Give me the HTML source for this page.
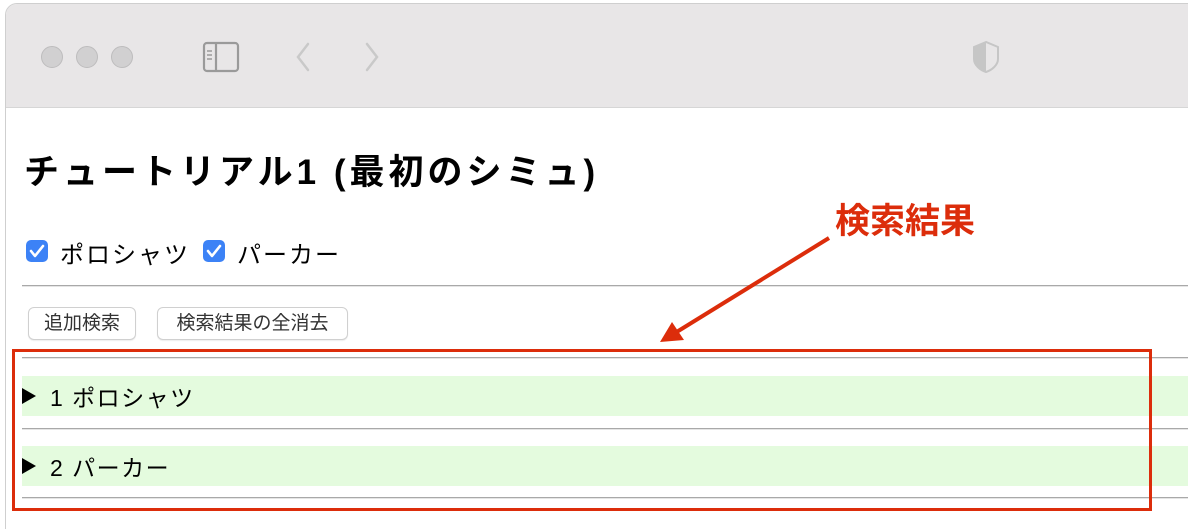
<!DOCTYPE html>
<html><head><meta charset="utf-8"><style>
*{margin:0;padding:0;box-sizing:border-box}
html,body{width:1188px;height:529px;overflow:hidden}
body{background:#fff;position:relative;font-family:"Liberation Sans","Noto Sans CJK JP",sans-serif;color:#000}
.win{position:absolute;left:5px;top:3px;width:1200px;height:540px;border:1px solid #cfcfcf;border-radius:12px 0 0 0;overflow:hidden;background:#fff}
.bar{position:absolute;left:0;top:0;right:0;height:104px;background:#e8e6e7;border-bottom:1px solid #d6d6d6}
.dot{position:absolute;top:42px;width:22px;height:22px;border-radius:50%;background:#d1d0d1;border:1px solid #bdbcbd}
.abs{position:absolute}
.hr{position:absolute;left:22px;right:0;height:2px;background:#a9a9a9;border-bottom:1px solid #e5e5e5}
.green{position:absolute;left:22px;right:0;height:40px;background:#e4fbde}
.btn{position:absolute;top:307px;height:33px;border:1px solid #d0d0d0;border-radius:6px;background:#fff;font-size:19px;line-height:31px;text-align:center;color:#333;box-shadow:0 1px 1px rgba(0,0,0,.08);white-space:nowrap}
.cb{position:absolute;top:240px;width:22px;height:22px;border-radius:5px;background:#3c82f6}
.row{position:absolute;left:50px;font-size:23px;letter-spacing:1.5px;white-space:nowrap}
.tri{position:absolute;left:22px;width:0;height:0;border-left:14px solid #000;border-top:8px solid transparent;border-bottom:8px solid transparent}
</style></head><body>
<div class="win">
<div class="bar">
<div class="dot" style="left:35px"></div><div class="dot" style="left:70px"></div><div class="dot" style="left:105px"></div>
<svg class="abs" style="left:196px;top:36px" width="40" height="34" viewBox="0 0 40 34"><rect x="2" y="3" width="34" height="28" rx="3" fill="none" stroke="#9a9a9a" stroke-width="2.2"/><line x1="14" y1="3" x2="14" y2="31" stroke="#9a9a9a" stroke-width="2.2"/><path d="M5 11h5M5 15h5M5 19h5" stroke="#9a9a9a" stroke-width="1.5"/></svg>
<svg class="abs" style="left:282px;top:36px" width="100" height="34"><path d="M20 4L10 17L20 30" fill="none" stroke="#c9c9c9" stroke-width="2.5" stroke-linecap="round"/><path d="M79 4L89 17L79 30" fill="none" stroke="#c9c9c9" stroke-width="2.5" stroke-linecap="round"/></svg>
<svg class="abs" style="left:965px;top:35px" width="30" height="36" viewBox="0 0 30 36"><path d="M15 3L3 8V20C3 26 9 31 15 33C21 31 27 26 27 20V8Z" fill="none" stroke="#c6c6c6" stroke-width="2"/><path d="M15 3L3 8V20C3 26 9 31 15 33Z" fill="#c6c6c6"/></svg>
</div>
</div>
<div class="abs" style="left:24px;top:144px;font-size:35px;font-weight:bold;letter-spacing:4px;white-space:nowrap">チュートリアル1 (最初のシミュ)</div>
<div class="cb" style="left:26px"><svg width="22" height="22"><path d="M5 11l4 5l8-10" fill="none" stroke="#fff" stroke-width="2.6" stroke-linecap="round" stroke-linejoin="round"/></svg></div>
<div class="abs" style="left:60px;top:235px;font-size:24px;letter-spacing:2px;white-space:nowrap">ポロシャツ</div>
<div class="cb" style="left:203px"><svg width="22" height="22"><path d="M5 11l4 5l8-10" fill="none" stroke="#fff" stroke-width="2.6" stroke-linecap="round" stroke-linejoin="round"/></svg></div>
<div class="abs" style="left:237px;top:235px;font-size:24px;letter-spacing:2px;white-space:nowrap">パーカー</div>
<div class="hr" style="top:285px"></div>
<div class="btn" style="left:28px;width:108px">追加検索</div>
<div class="btn" style="left:157px;width:191px">検索結果の全消去</div>
<div class="hr" style="top:357px"></div>
<div class="green" style="top:376px"></div>
<div class="tri" style="top:388px"></div>
<div class="row" style="top:379px">1 ポロシャツ</div>
<div class="hr" style="top:428px"></div>
<div class="green" style="top:446px"></div>
<div class="tri" style="top:458px"></div>
<div class="row" style="top:449px">2 パーカー</div>
<div class="hr" style="top:497px"></div>
<div class="abs" style="left:12px;top:349px;width:1140px;height:162px;border:3px solid #dc2d0b"></div>
<div class="abs" style="left:835px;top:193px;font-size:35px;font-weight:bold;color:#dc2d0b;white-space:nowrap">検索結果</div>
<svg class="abs" style="left:0;top:0" width="1188" height="529"><line x1="829" y1="238" x2="675" y2="333" stroke="#dc2d0b" stroke-width="4"/><path d="M660 342L672 322L684 340Z" fill="#dc2d0b"/></svg>
</body></html>
